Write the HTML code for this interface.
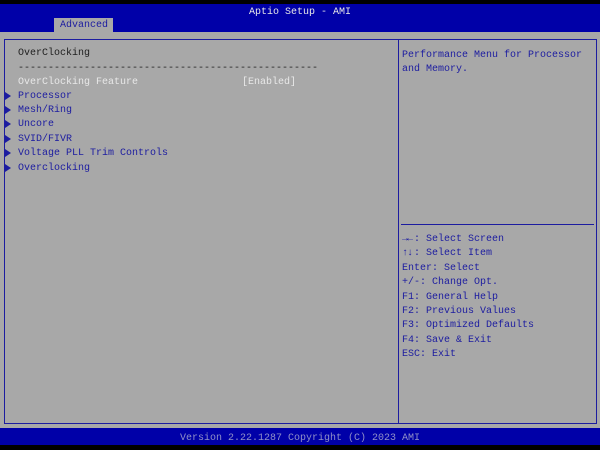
<!DOCTYPE html>
<html><head><style>
body{margin:0;width:600px;height:450px;background:#000;position:relative;overflow:hidden;font-family:"Liberation Mono","DejaVu Sans Mono",monospace;font-size:10px;}
div{position:absolute;}
.t{white-space:pre;line-height:12px;}
.b{color:#1c1ca0}
.w{color:#e8e8e8}
.k{color:#202020}
.tr{width:0;height:0;border-left:6px solid #1c1ca0;border-top:4px solid transparent;border-bottom:4px solid transparent;left:5px;}
.ar{display:inline-block;width:12px;font-weight:bold;letter-spacing:-1px}
</style></head><body>
<div style="left:0;top:4px;width:600px;height:28px;background:#0000a8"></div>
<div class="t w" style="left:0;top:7px;width:600px;text-align:center">Aptio Setup - AMI</div>
<div style="left:54px;top:18px;width:59px;height:14px;background:#a8a8a8"></div>
<div class="t b" style="left:60px;top:20px">Advanced</div>
<div style="left:0;top:32px;width:600px;height:396px;background:#a8a8a8"></div>
<div style="left:4px;top:39px;width:591px;height:383px;border:1px solid #1c1ca0"></div>
<div style="left:398px;top:40px;width:1px;height:383px;background:#1c1ca0"></div>
<div style="left:401px;top:224px;width:193px;height:1px;background:#1c1ca0"></div>
<div class="t k" style="left:18px;top:48px">OverClocking</div>
<div class="t k" style="left:18px;top:63px">--------------------------------------------------</div>
<div class="t w" style="left:18px;top:77px">OverClocking Feature</div>
<div class="t w" style="left:242px;top:77px">[Enabled]</div>
<div class="tr" style="top:92px"></div><div class="t b" style="left:18px;top:91px">Processor</div>
<div class="tr" style="top:106px"></div><div class="t b" style="left:18px;top:105px">Mesh/Ring</div>
<div class="tr" style="top:120px"></div><div class="t b" style="left:18px;top:119px">Uncore</div>
<div class="tr" style="top:135px"></div><div class="t b" style="left:18px;top:134px">SVID/FIVR</div>
<div class="tr" style="top:149px"></div><div class="t b" style="left:18px;top:148px">Voltage PLL Trim Controls</div>
<div class="tr" style="top:164px"></div><div class="t b" style="left:18px;top:163px">Overclocking</div>
<div class="t b" style="left:402px;top:49px;line-height:14.4px">Performance Menu for Processor
and Memory.</div>
<div class="t b" style="left:402px;top:233px;line-height:14.4px"><span class="ar">&#8594;&#8592;</span>: Select Screen
<span class="ar">&#8593;&#8595;</span>: Select Item
Enter: Select
+/-: Change Opt.
F1: General Help
F2: Previous Values
F3: Optimized Defaults
F4: Save &amp; Exit
ESC: Exit</div>
<div style="left:0;top:428px;width:600px;height:17px;background:#0000a8"></div>
<div class="t" style="left:0;top:433px;width:600px;text-align:center;color:#9090c8">Version 2.22.1287 Copyright (C) 2023 AMI</div>
</body></html>
